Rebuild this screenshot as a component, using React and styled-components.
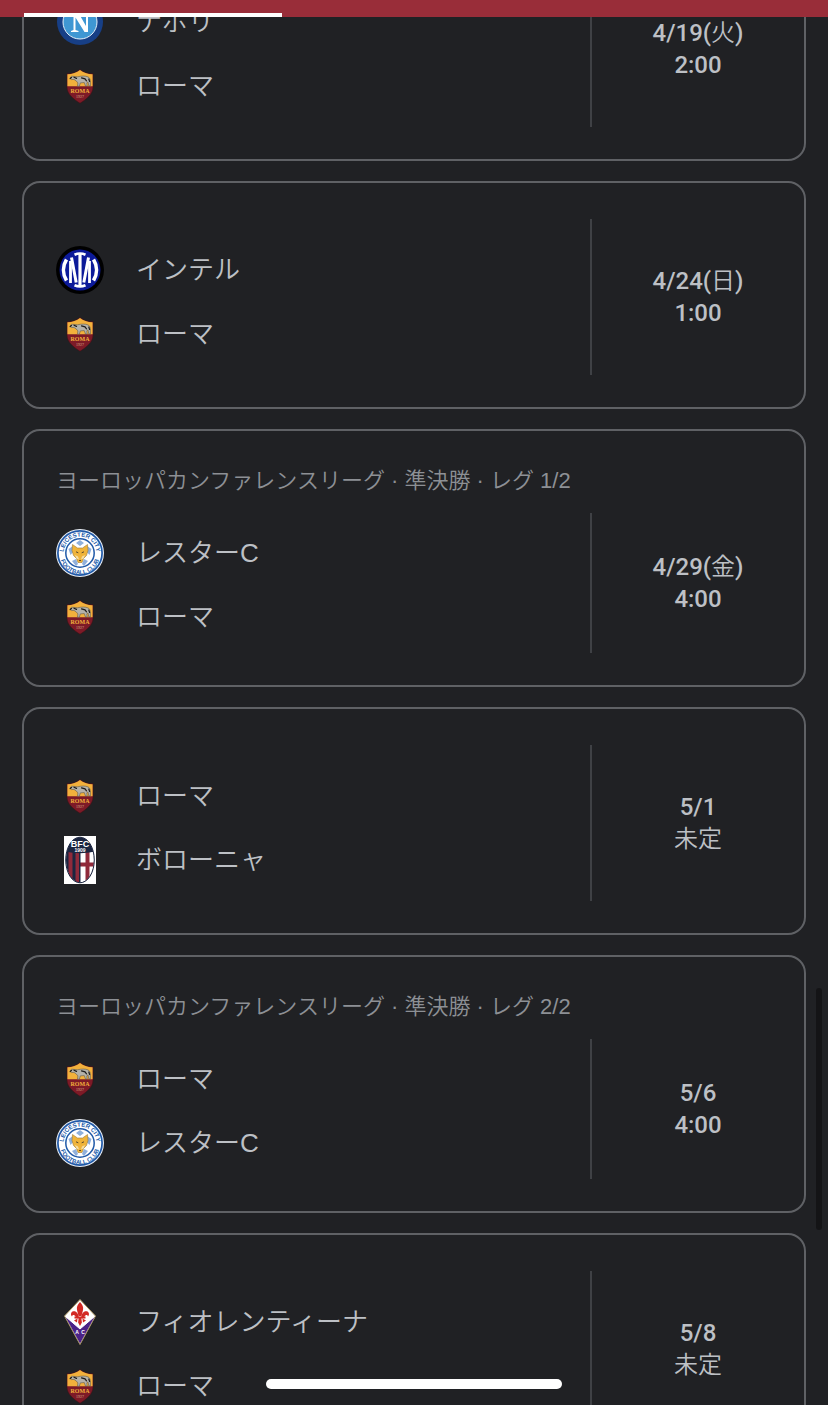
import React, { useLayoutEffect, useRef } from 'react';
import styled, { createGlobalStyle, ThemeProvider } from 'styled-components';

const theme = {
    colors: {
        background: '#202124',
        header: '#992d39',
        border: '#5f6165',
        divider: '#3f4145',
        text: '#bdc0c5',
        muted: '#8d9095',
        white: '#ffffff',
        thumb: '#141416'
    }
};

const matches = [
    { id: 1, teams: ['napoli', 'roma'], date: '4/19', day: '火', time: '2:00' },
    { id: 2, teams: ['inter', 'roma'], date: '4/24', day: '日', time: '1:00' },
    {
        id: 3,
        league: 'ヨーロッパカンファレンスリーグ · 準決勝 · レグ 1/2',
        teams: ['leicester', 'roma'],
        date: '4/29',
        day: '金',
        time: '4:00'
    },
    { id: 4, teams: ['roma', 'bologna'], date: '5/1' },
    {
        id: 5,
        league: 'ヨーロッパカンファレンスリーグ · 準決勝 · レグ 2/2',
        teams: ['roma', 'leicester'],
        date: '5/6',
        time: '4:00'
    },
    { id: 6, teams: ['fiorentina', 'roma'], date: '5/8' }
];

const NapoliCrest = () => (
    <Crest viewBox='0 0 48 48' aria-hidden='true'>
        <circle cx='24' cy='24' r='23' fill='#173f86' />
        <circle cx='24' cy='24' r='17' fill='#3f97d3' stroke='#e8f2fa' strokeWidth='1' />
        <path
            fill='#fff'
            d='M15 14h7l8 14V16l-2.500-1v-1h7v1L32 16v18h-3.500L19.500 19.500V32l3 1v1h-7.500v-1l2.500-1V16L15 15z'
        />
    </Crest>
);

const RomaCrest = () => (
    <Crest viewBox='0 0 48 48' aria-hidden='true'>
        <path
            fill='#7d1a27'
            stroke='#3a1216'
            strokeWidth='0.600'
            d='M24 7.500c3 2.800 8 4.500 13 4.300v13.500c0 7-7 12.200-13 16-6-3.800-13-9-13-16V11.800c5 .2 10-1.500 13-4.300z'
        />
        <path fill='#f2b13c' d='M24 8.100c3.200 2.600 7.800 4.200 12.600 4.200v12H11.400v-12c4.800 0 9.400-1.600 12.600-4.200z' />
        <path
            fill='#b4b2aa'
            stroke='#4a4843'
            strokeWidth='0.500'
            d='M14 16.200l1.500-2 3.500.3 2.500.3c4-1 8-1 10.500.1 1.800.8 2.300 2.700 2.400 5v4h-1.600l-.8-4-1.200.9.4 3.300h-1.700l-1.200-3.500-4 .3-.9 3.300h-1.900l.4-3.300-1.700-2-2.200-1.500-2.500.2z'
        />
        <path
            fill='none'
            stroke='#1e1d1c'
            strokeWidth='1.200'
            strokeLinecap='round'
            d='M14.200 16.600l1.300-1M18 15.200l2.500 1.200M25.500 15.800l3.500 1 1.500 2M32.800 17l.8 2.500'
        />
        <text x='24' y='31' textAnchor='middle' fontFamily='Liberation Serif, serif' fontWeight='700' fontSize='6' fill='#f2b13c'>
            ROMA
        </text>
        <text x='24' y='36' textAnchor='middle' fontFamily='Liberation Serif, serif' fontSize='4' fill='#dcae8c'>
            1927
        </text>
    </Crest>
);

const InterCrest = () => (
    <Crest viewBox='0 0 48 48' aria-hidden='true'>
        <circle cx='24' cy='24' r='24' fill='#000' />
        <circle cx='24' cy='24' r='20.500' fill='#0c1a99' />
        <g fill='none' stroke='#fff'>
            <path strokeWidth='3.200' d='M24 8v32' />
            <path strokeWidth='2.600' d='M18.500 8.700c3-1.300 8-1.300 11 0M18.500 39.300c3 1.300 8 1.300 11 0' />
            <path strokeWidth='3.600' d='M10.500 13.500C6.500 20 6.500 28 10.500 34.500M37.500 13.500c4 6.500 4 14.500 0 21' />
            <path strokeWidth='2.800' d='M14.500 15v22M33.500 15v22' />
            <path strokeWidth='3' d='M15.500 11.500l4.700 25M32.500 11.500l-4.700 25' />
        </g>
    </Crest>
);

const LeicesterCrest = ({ id }) => (
    <Crest viewBox='0 0 48 48' aria-hidden='true'>
        <defs>
            <path id={`${id}-top`} d='M10.300 33A16.400 16.400 0 1 1 37.700 33' />
            <path id={`${id}-bottom`} d='M4.400 22A19.900 19.900 0 1 0 43.600 22' />
        </defs>
        <circle cx='24' cy='24' r='24' fill='#e9eff7' />
        <circle cx='24' cy='24' r='22.100' fill='#fff' stroke='#2059a8' strokeWidth='1.700' />
        <circle cx='24' cy='24' r='14.200' fill='#fff' stroke='#2059a8' strokeWidth='1.500' />
        <path
            fill='#8fb0dc'
            d='M24 11l4 3-4 3-4-3zM12.500 20l4.500-3 1 5-3.500 4zM35.500 20L31 17l-1 5 3.500 4zM16 32l4-2 2 5-2 2zM32 32l-4-2-2 5 2 2z'
        />
        <path
            fill='#f0b43a'
            stroke='#9a7a3c'
            strokeWidth='0.600'
            d='M16.500 15.500l5 3.500h5l5-3.500.5 6-1.500 5-3 3-1.500 4h-4l-1.500-4-3-3-1.500-5z'
        />
        <path fill='#f7dfa5' d='M19 26l3 1.500 1 3-2.500-1zM29 26l-3 1.500-1 3 2.500-1z' />
        <path fill='none' stroke='#5b4a2e' strokeWidth='1' d='M20 22.800l2.300 1M28 22.800l-2.300 1M23 31.500h2' />
        <g fontFamily='Liberation Sans, sans-serif' fontWeight='700' fontSize='6' fill='#2059a8'>
            <text textAnchor='middle'>
                <textPath href={`#${id}-top`} startOffset='50%'>LEICESTER CITY</textPath>
            </text>
            <text textAnchor='middle'>
                <textPath href={`#${id}-bottom`} startOffset='50%'>FOOTBALL CLUB</textPath>
            </text>
        </g>
    </Crest>
);

const BolognaCrest = () => (
    <Crest viewBox='0 0 48 48' aria-hidden='true'>
        <clipPath id='bologna-oval'>
            <ellipse cx='24' cy='24' rx='14' ry='22.500' />
        </clipPath>
        <path fill='#fff' d='M8 0h32v48H8z' />
        <g clipPath='url(#bologna-oval)'>
            <path fill='#1b2540' d='M8 0h32v48H8z' />
            <path fill='#8f2a3b' d='M12.500 15h4v33h-4zM19.500 15h3.500v33h-3.500z' />
            <path fill='#fff' d='M24 16h16v32H24z' />
            <path fill='#8f2a3b' d='M29.500 16h4v32h-4zM24 26.500h16v4H24z' />
            <path fill='#1b2540' d='M8 0h32v15c-9 3-23 3-32 0zM23 16h1.500v32H23z' />
        </g>
        <ellipse cx='24' cy='24' rx='14.300' ry='22.800' fill='none' stroke='#1b2540' strokeWidth='1' />
        <g fontFamily='Liberation Sans, sans-serif' fontWeight='700' fill='#fff' textAnchor='middle'>
            <text x='24' y='11' fontSize='9'>BFC</text>
            <text x='24' y='16' fontSize='5'>1909</text>
        </g>
    </Crest>
);

const FiorentinaCrest = () => (
    <Crest viewBox='0 0 48 48' aria-hidden='true'>
        <path fill='#fff' stroke='#a8935f' strokeWidth='1' d='M24 1.500L39.500 18 24 46.500 8.500 18z' />
        <path fill='#4b2287' d='M9.300 18.500L24 31l14.700-12.500L24 45.500z' />
        <path fill='none' stroke='#fff' strokeWidth='1' d='M9.500 18.500L24 31l14.500-12.500' />
        <g fill='#d22a25'>
            <path d='M24 4c2.600 2.700 3.600 5 3 8L25.500 18h-3L21 12c-.6-3 .4-5.300 3-8z' />
            <path d='M22.800 19.500c-.5-4.500-2.800-6.800-5.500-6.200-2.500.5-3 3.500-1.300 5.200.4-1.200 1.400-1.700 2.300-1.200 1 .5 1.400 1.400 1.600 2.200zM25.200 19.500c.5-4.500 2.800-6.800 5.500-6.200 2.500.5 3 3.500 1.300 5.200-.4-1.200-1.400-1.700-2.300-1.200-1 .5-1.400 1.400-1.600 2.200z' />
            <path d='M18.500 18.500h11v2h-11zM22.700 20h2.600l.6 4.500L24 28l-1.900-3.500zM21.500 20.500l-.5 4-3-2zM26.500 20.500l.5 4 3-2z' />
        </g>
        <g fontFamily='Liberation Sans, sans-serif' fontWeight='700' fontSize='5' fill='#fff' textAnchor='middle'>
            <text x='21' y='36'>A</text>
            <text x='27' y='36'>C</text>
        </g>
    </Crest>
);

const teams = {
    napoli: { name: 'ナポリ', crest: NapoliCrest },
    roma: { name: 'ローマ', crest: RomaCrest },
    inter: { name: 'インテル', crest: InterCrest },
    leicester: { name: 'レスターC', crest: LeicesterCrest },
    bologna: { name: 'ボローニャ', crest: BolognaCrest },
    fiorentina: { name: 'フィオレンティーナ', crest: FiorentinaCrest }
};

const MatchCard = ({ match }) => {
    const renderTeam = (key) => {
        const { name, crest: TeamCrest } = teams[key];

        return (
            <Team key={key}>
                <TeamCrest id={`match-${match.id}-${key}`} />
                <span>{name}</span>
            </Team>
        );
    };

    return (
        <Card>
            {match.league && <League>{match.league}</League>}
            <CardBody>
                <Teams $compact={Boolean(match.league)}>
                    {match.teams.map(renderTeam)}
                </Teams>
                <Kickoff>
                    <span>
                        {match.date}
                        {match.day && (
                            <>
                                (<Kanji>{match.day}</Kanji>)
                            </>
                        )}
                    </span>
                    {match.time ? <span>{match.time}</span> : <Kanji>未定</Kanji>}
                </Kickoff>
            </CardBody>
        </Card>
    );
};

const App = () => {
    const scroller = useRef(null);

    // open the list part way down the first match
    useLayoutEffect(() => {
        scroller.current.scrollTop = 104;
    }, []);

    return (
        <ThemeProvider theme={theme}>
            <GlobalStyle />
            <Screen>
                <Header>
                    <TabIndicator />
                </Header>
                <MatchScroller ref={scroller}>
                    <MatchList>
                        {matches.map((match) => (
                            <MatchCard key={match.id} match={match} />
                        ))}
                    </MatchList>
                </MatchScroller>
                <ScrollThumb />
                <HomeIndicator />
            </Screen>
        </ThemeProvider>
    );
};

const GlobalStyle = createGlobalStyle`
    * {
        box-sizing: border-box;
    }

    body {
        margin: 0;
        background-color: ${(props) => props.theme.colors.background};
        color: ${(props) => props.theme.colors.text};
        font-family: 'Liberation Sans', 'Noto Sans CJK JP', sans-serif;
    }
`;

const Screen = styled.div`
    position: relative;
    display: flex;
    flex-direction: column;
    height: 100vh;
    overflow: hidden;
`;

const Header = styled.header`
    display: flex;
    flex: none;
    align-items: flex-end;
    height: 17px;
    padding: 0 24px;
    background-color: ${(props) => props.theme.colors.header};
`;

const TabIndicator = styled.div`
    width: 258px;
    height: 4px;
    background-color: ${(props) => props.theme.colors.white};
`;

const MatchScroller = styled.main`
    flex: 1;
    min-height: 0;
    overflow-y: auto;
    scrollbar-width: none;
`;

const MatchList = styled.ul`
    display: flex;
    flex-direction: column;
    gap: 20px;
    margin: 0;
    padding: 20px 22px;
    list-style: none;
`;

const Card = styled.li`
    padding: 36px 0 32px 32px;
    border: 2px solid ${(props) => props.theme.colors.border};
    border-radius: 18px;
`;

const League = styled.h2`
    margin: 0 0 18px;
    color: ${(props) => props.theme.colors.muted};
    font-size: 22px;
    font-weight: 350;
    line-height: 28px;
`;

const CardBody = styled.div`
    display: grid;
    grid-template-columns: 1fr 214px;
`;

const Teams = styled.div`
    display: flex;
    flex-direction: column;
    gap: 16px;
    padding: ${(props) => (props.$compact ? '16px 0 12px' : '27px 0 17px')};
`;

const Team = styled.div`
    display: flex;
    align-items: center;
    gap: 32px;
    font-size: 26px;
    font-weight: 350;
    line-height: 48px;
`;

const Crest = styled.svg`
    flex: none;
    width: 48px;
    height: 48px;
`;

const Kickoff = styled.div`
    display: flex;
    flex-direction: column;
    align-items: center;
    justify-content: center;
    border-left: 2px solid ${(props) => props.theme.colors.divider};
    font-family: Roboto, 'Noto Sans CJK JP', sans-serif;
    font-size: 24px;
    font-weight: 500;
    line-height: 32px;
`;

const Kanji = styled.span`
    font-weight: 350;
`;

const ScrollThumb = styled.div`
    position: absolute;
    top: 988px;
    right: 6px;
    width: 6px;
    height: 242px;
    border-radius: 3px;
    background-color: ${(props) => props.theme.colors.thumb};
`;

const HomeIndicator = styled.div`
    position: absolute;
    bottom: 16px;
    left: 50%;
    width: 296px;
    height: 10px;
    margin-left: -148px;
    border-radius: 5px;
    background-color: ${(props) => props.theme.colors.white};
`;

export default App;
